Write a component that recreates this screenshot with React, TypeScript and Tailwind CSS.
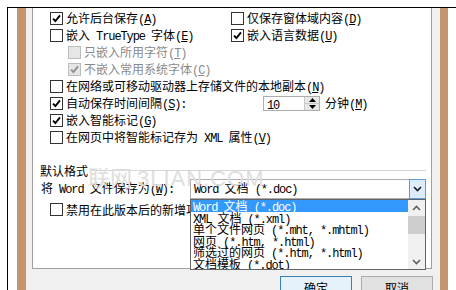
import React from "react";

const cn = (...c: (string | false | undefined)[]) => c.filter(Boolean).join(" ");

// half-width latin run, ~6px per char like SimSun
const L = ({ children }: { children: React.ReactNode }) => (
  <span className="font-['Liberation_Mono',monospace] text-[12px] tracking-[-1.1px] whitespace-pre">{children}</span>
);

const K = ({ c }: { c: string }) => (
  <L>
    (<span className="underline underline-offset-1">{c}</span>)
  </L>
);

const Box = ({ checked, disabled }: { checked?: boolean; disabled?: boolean }) => (
  <span
    className={cn(
      "w-[13px] h-[13px] border flex items-center justify-center shrink-0",
      disabled ? "border-[#bcbcbc] bg-[#e6e6e6]" : "border-[#333333] bg-white"
    )}
  >
    {checked && (
      <svg width="9" height="9" viewBox="0 0 9 9">
        <path
          d="M1 4.6 L3.4 7 L8 1.4"
          stroke={disabled ? "#8f8f8f" : "#000"}
          strokeWidth="1.9"
          fill="none"
        />
      </svg>
    )}
  </span>
);

const Check = ({
  checked,
  disabled,
  children,
  className,
}: {
  checked?: boolean;
  disabled?: boolean;
  children: React.ReactNode;
  className?: string;
}) => (
  <div className={cn("flex items-center gap-[3px] shrink-0", className)}>
    <Box checked={checked} disabled={disabled} />
    <span className={cn("whitespace-nowrap", disabled ? "text-[#8a8a8a]" : "text-black")}>
      {children}
    </span>
  </div>
);

const Chevron = ({ up, color = "#606060" }: { up?: boolean; color?: string }) => (
  <svg width="9" height="6" viewBox="0 0 9 6">
    <path
      d={up ? "M1 5 L4.5 1.5 L8 5" : "M1 1 L4.5 4.5 L8 1"}
      stroke={color}
      strokeWidth="1.6"
      fill="none"
    />
  </svg>
);

const formats = [
  <><L>Word </L>文档<L> (*.doc)</L></>,
  <><L>XML </L>文档<L> (*.xml)</L></>,
  <>单个文件网页<L> (*.mht, *.mhtml)</L></>,
  <>网页<L> (*.htm, *.html)</L></>,
  <>筛选过的网页<L> (*.htm, *.html)</L></>,
  <>文档模板<L> (*.dot)</L></>,
];

export default function App() {
  return (
    <div className="w-[456px] h-[290px] bg-white overflow-hidden pl-[7px] pt-[7px] font-['Noto_Sans_CJK_SC',sans-serif] text-[12px] leading-[17px] text-black">
      <div className="h-[283px] border-l border-t border-black flex">
        <div className="w-[9px] shrink-0" />
        <div className="w-[9px] shrink-0 bg-[#c4956f]" />
        <div className="w-[414px] shrink-0 bg-[#f0f0f0] pl-[6px] flex flex-col">
          <div className="w-[400px] h-[261px] shrink-0 bg-white border-l border-r border-b border-[#a0a0a0] relative pt-[2px]">
            <div className="flex h-[17px] items-center pl-[17px]">
              <Check checked className="w-[181px]">
                允许后台保存<K c="A" />
              </Check>
              <Check>
                仅保存窗体域内容<K c="D" />
              </Check>
            </div>
            <div className="flex h-[17px] items-center pl-[17px]">
              <Check className="w-[181px]">
                嵌入<L> TrueType </L>字体<K c="E" />
              </Check>
              <Check checked>
                嵌入语言数据<K c="U" />
              </Check>
            </div>
            <div className="flex h-[17px] items-center pl-[35px]">
              <Check disabled>
                只嵌入所用字符<K c="T" />
              </Check>
            </div>
            <div className="flex h-[17px] items-center pl-[35px]">
              <Check checked disabled>
                不嵌入常用系统字体<K c="C" />
              </Check>
            </div>
            <div className="flex h-[17px] items-center pl-[17px]">
              <Check>
                在网络或可移动驱动器上存储文件的本地副本<K c="N" />
              </Check>
            </div>
            <div className="flex h-[17px] items-center pl-[17px]">
              <Box checked />
              <span className="w-[197px] ml-[3px] shrink-0 whitespace-nowrap">
                自动保存时间间隔<K c="S" /><L>:</L>
              </span>
              <div className="w-[57px] h-[15px] border border-[#abadb3] flex">
                <span className="flex-1 pl-[3px] leading-[13px]">
                  <L>10</L>
                </span>
                <div className="w-[15px] flex flex-col bg-[#e8e8e8] border-l border-[#c8c8c8]">
                  <div className="flex-1 flex items-center justify-center border-b border-[#c8c8c8]">
                    <svg width="7" height="4" viewBox="0 0 7 4">
                      <path d="M0 4 L3.5 0 L7 4 Z" fill="#000" />
                    </svg>
                  </div>
                  <div className="flex-1 flex items-center justify-center">
                    <svg width="7" height="4" viewBox="0 0 7 4">
                      <path d="M0 0 L3.5 4 L7 0 Z" fill="#000" />
                    </svg>
                  </div>
                </div>
              </div>
              <span className="ml-[5px] whitespace-nowrap">
                分钟<K c="M" />
              </span>
            </div>
            <div className="flex h-[17px] items-center pl-[17px]">
              <Check checked>
                嵌入智能标记<K c="G" />
              </Check>
            </div>
            <div className="flex h-[17px] items-center pl-[17px]">
              <Check>
                在网页中将智能标记存为<L> XML </L>属性<K c="V" />
              </Check>
            </div>

            <div className="flex h-[17px] items-center pl-[7px] mt-[16px]">
              <span className="whitespace-nowrap">默认格式</span>
              <div className="flex-1 h-px bg-[#d5d5d5] ml-[4px] mr-[5px]" />
            </div>
            <div className="flex h-[20px] items-center pl-[8px]">
              <span className="w-[149px] shrink-0 whitespace-nowrap">
                将<L> Word </L>文件保存为<K c="W" /><L>:</L>
              </span>
              <div className="w-[236px] h-[20px] border border-[#abadb3] flex items-center relative">
                <span className="flex-1 pl-[3px] whitespace-nowrap">
                  <L>Word </L>文档<L> (*.doc)</L>
                </span>
                <div className="w-[17px] h-[20px] -my-px -mr-px border border-[#569de5] bg-[#dcecfc] flex items-center justify-center">
                  <Chevron color="#1a1a1a" />
                </div>
                <div className="absolute left-[-1px] top-[19px] w-[236px] h-[71px] border border-[#646464] bg-white flex z-10 overflow-hidden">
                  <div className="w-[217px] flex flex-col">
                    {formats.map((f, i) => (
                      <div
                        key={i}
                        className={cn(
                          "h-[11.5px] leading-[11.5px] pl-[2px] whitespace-nowrap",
                          i === 0 ? "bg-[#3399ff] text-white" : "text-black"
                        )}
                      >
                        {f}
                      </div>
                    ))}
                  </div>
                  <div className="flex-1 bg-[#f0f0f0] flex flex-col items-center">
                    <div className="h-[16px] flex items-center justify-center">
                      <Chevron up />
                    </div>
                    <div className="w-full h-[18px] bg-[#cdcdcd]" />
                    <div className="flex-1" />
                    <div className="h-[15px] flex items-center justify-center">
                      <Chevron />
                    </div>
                  </div>
                </div>
              </div>
            </div>
            <div className="flex h-[17px] items-center pl-[17px] mt-[2px]">
              <Check>禁用在此版本后的新增功能</Check>
            </div>

            <div className="absolute left-[55px] top-[157px] whitespace-nowrap text-[22px] leading-[22px] text-[#dedede] pointer-events-none">
              联网 <span className="font-['Liberation_Sans',sans-serif] tracking-[1px]">3LIAN.COM</span>
            </div>
          </div>
          <div className="flex justify-end gap-[9px] pr-[7px] mt-[7px]">
            <div className="w-[72px] h-[23px] border border-[#3c7fb1] bg-[#e5f1fb] flex items-center justify-center">
              确定
            </div>
            <div className="w-[72px] h-[23px] border border-[#acacac] bg-[#e1e1e1] flex items-center justify-center">
              取消
            </div>
          </div>
        </div>
        <div className="w-[8px] shrink-0 bg-[#c4956f]" />
      </div>
    </div>
  );
}
